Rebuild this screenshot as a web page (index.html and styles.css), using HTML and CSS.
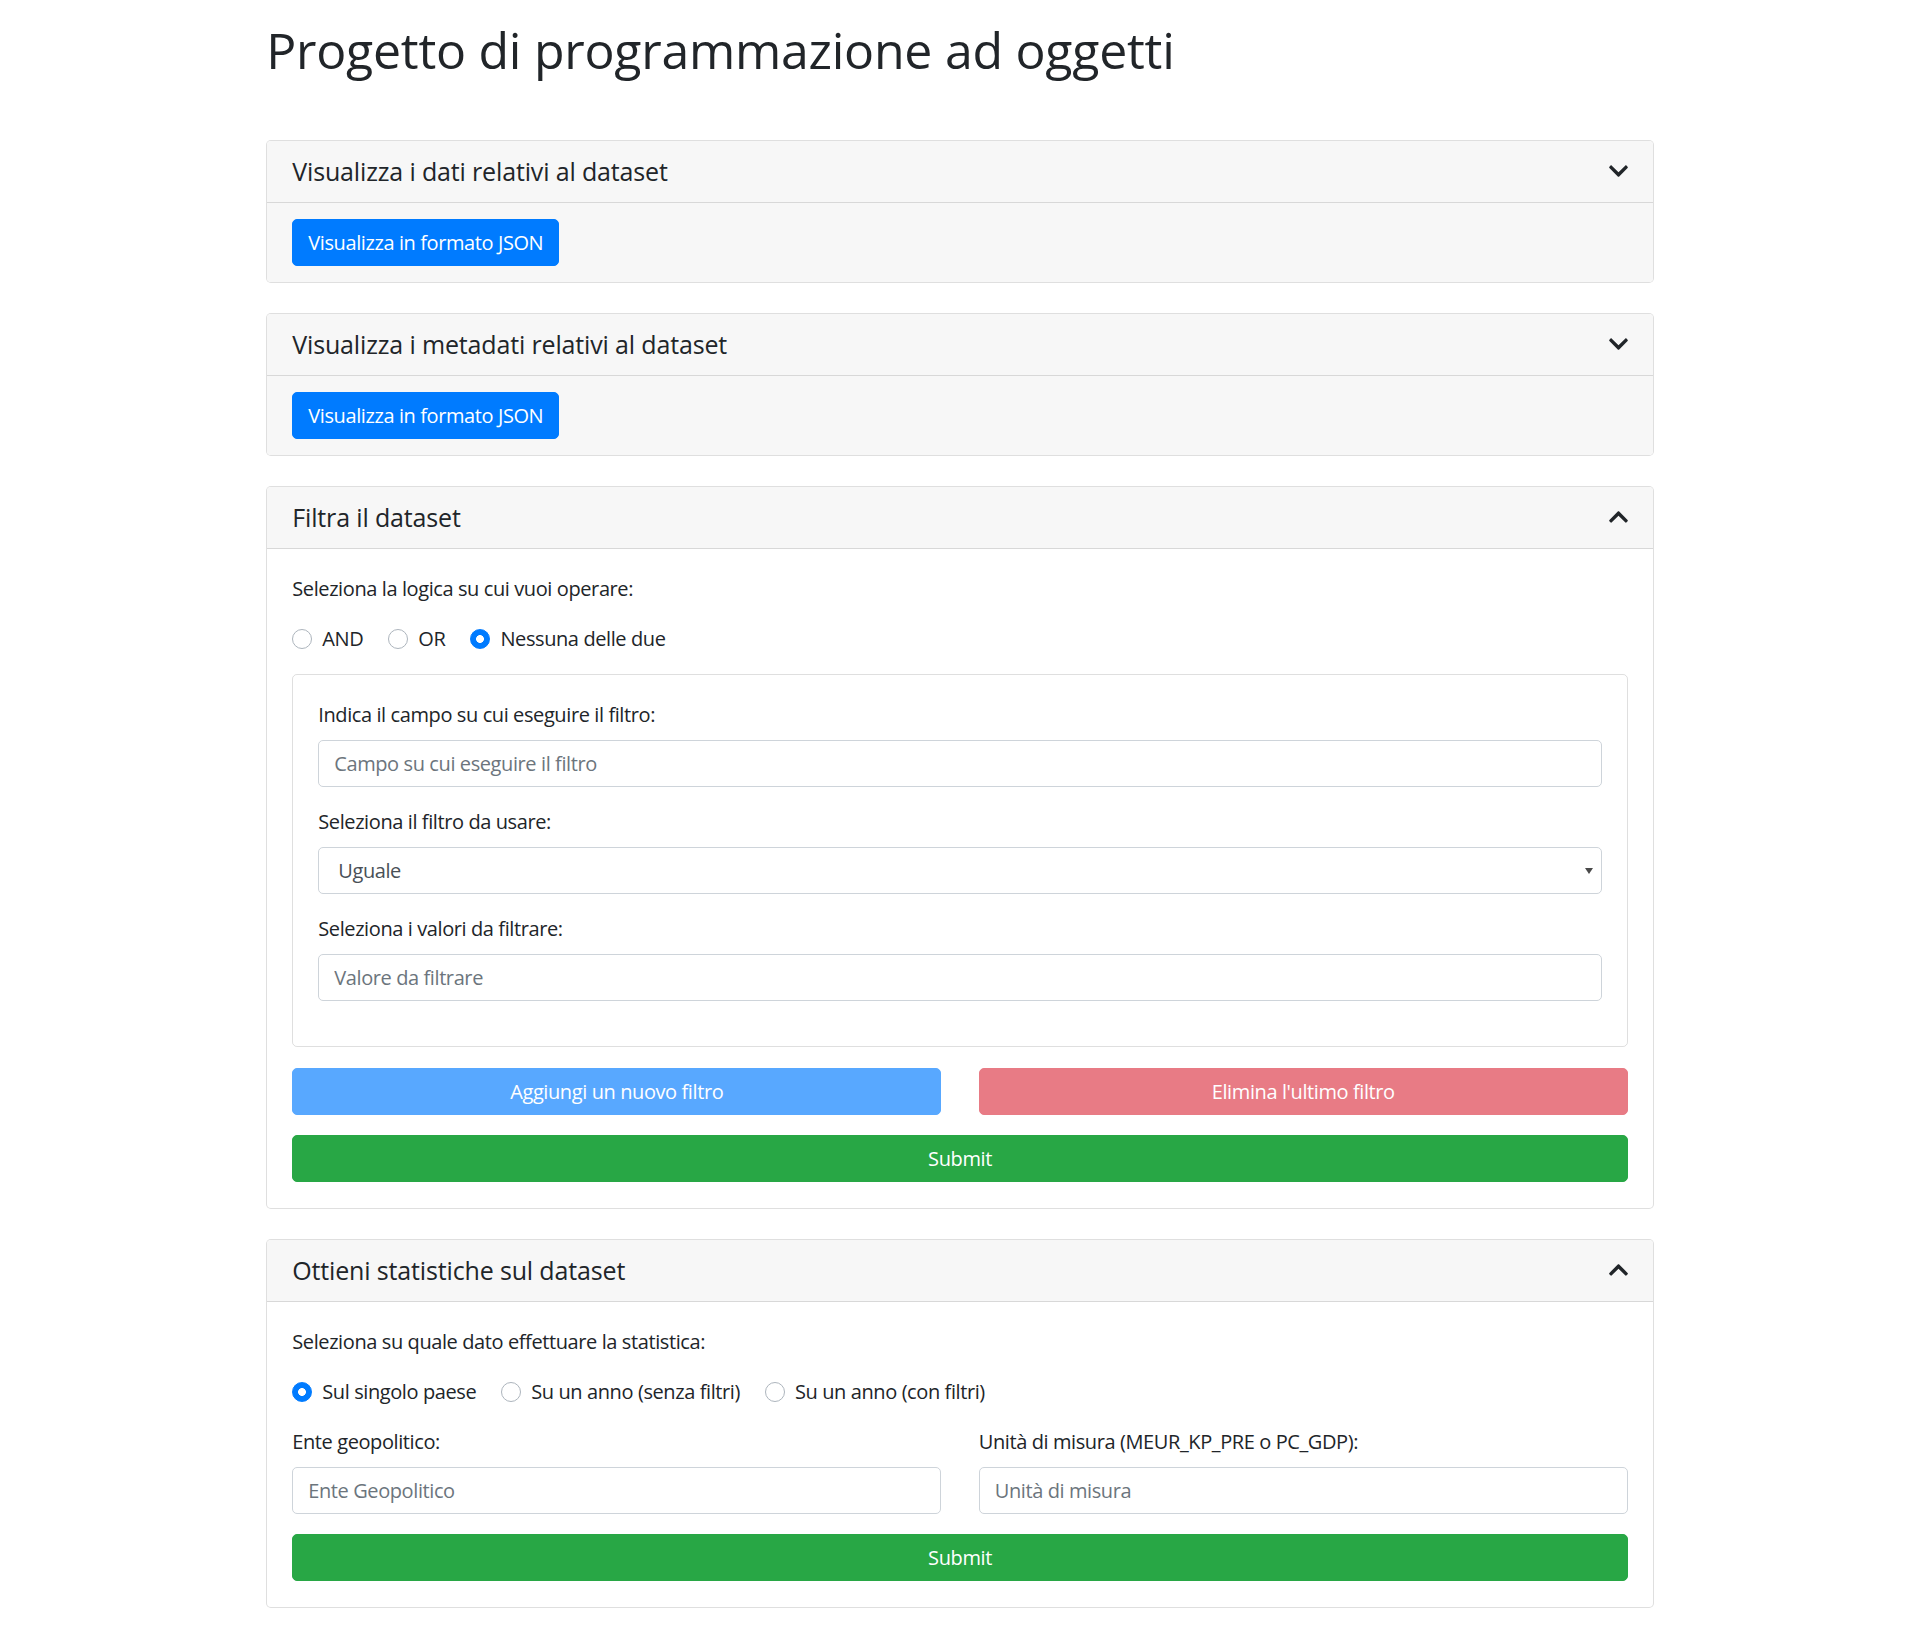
FILE: index.html
```html
<!DOCTYPE html>
<html lang="it">
<head>
<meta charset="utf-8">
<title>Progetto di programmazione ad oggetti</title>
<link rel="stylesheet" href="styles.css">
</head>
<body>
<div class="container">
  <h1 class="page-title">Progetto di programmazione ad oggetti</h1>

  <section class="card">
    <div class="card-header">
      <h5 class="card-title">Visualizza i dati relativi al dataset</h5>
      <svg class="chevron" viewBox="3 120 442 269" aria-hidden="true"><path d="M207.029 381.476L12.686 187.132c-9.373-9.373-9.373-24.569 0-33.941l22.667-22.667c9.357-9.357 24.522-9.375 33.901-.04L224 284.505l154.745-154.021c9.379-9.335 24.544-9.317 33.901.04l22.667 22.667c9.373 9.373 9.373 24.569 0 33.941L240.971 381.476c-9.373 9.372-24.569 9.372-33.942 0z"/></svg>
    </div>
    <div class="card-body card-body-grey">
      <button class="btn btn-primary" type="button">Visualizza in formato JSON</button>
    </div>
  </section>

  <section class="card">
    <div class="card-header">
      <h5 class="card-title">Visualizza i metadati relativi al dataset</h5>
      <svg class="chevron" viewBox="3 120 442 269" aria-hidden="true"><path d="M207.029 381.476L12.686 187.132c-9.373-9.373-9.373-24.569 0-33.941l22.667-22.667c9.357-9.357 24.522-9.375 33.901-.04L224 284.505l154.745-154.021c9.379-9.335 24.544-9.317 33.901.04l22.667 22.667c9.373 9.373 9.373 24.569 0 33.941L240.971 381.476c-9.373 9.372-24.569 9.372-33.942 0z"/></svg>
    </div>
    <div class="card-body card-body-grey">
      <button class="btn btn-primary" type="button">Visualizza in formato JSON</button>
    </div>
  </section>

  <section class="card">
    <div class="card-header">
      <h5 class="card-title">Filtra il dataset</h5>
      <svg class="chevron" viewBox="3 123 442 269" aria-hidden="true"><path d="M240.971 130.524l194.343 194.343c9.373 9.373 9.373 24.569 0 33.941l-22.667 22.667c-9.357 9.357-24.522 9.375-33.901.04L224 227.495 69.255 381.516c-9.379 9.335-24.544 9.317-33.901-.04l-22.667-22.667c-9.373-9.373-9.373-24.569 0-33.941L207.03 130.525c9.372-9.373 24.568-9.373 33.941-.001z"/></svg>
    </div>
    <div class="card-body">
      <p class="section-label">Seleziona la logica su cui vuoi operare:</p>
      <div class="radio-group">
        <label class="radio"><input type="radio" name="logica"><span>AND</span></label>
        <label class="radio"><input type="radio" name="logica"><span>OR</span></label>
        <label class="radio"><input type="radio" name="logica" checked><span>Nessuna delle due</span></label>
      </div>
      <div class="filter-box">
        <div class="form-group">
          <label class="field-label">Indica il campo su cui eseguire il filtro:</label>
          <input class="form-control" type="text" placeholder="Campo su cui eseguire il filtro">
        </div>
        <div class="form-group">
          <label class="field-label">Seleziona il filtro da usare:</label>
          <div class="select-wrap">
            <select class="form-control form-select">
              <option>Uguale</option>
            </select>
          </div>
        </div>
        <div class="form-group">
          <label class="field-label">Seleziona i valori da filtrare:</label>
          <input class="form-control" type="text" placeholder="Valore da filtrare">
        </div>
      </div>
      <div class="two-cols">
        <button class="btn btn-primary btn-block" type="button" disabled>Aggiungi un nuovo filtro</button>
        <button class="btn btn-danger btn-block" type="button" disabled>Elimina l'ultimo filtro</button>
      </div>
      <button class="btn btn-success btn-block" type="button">Submit</button>
    </div>
  </section>

  <section class="card">
    <div class="card-header">
      <h5 class="card-title">Ottieni statistiche sul dataset</h5>
      <svg class="chevron" viewBox="3 123 442 269" aria-hidden="true"><path d="M240.971 130.524l194.343 194.343c9.373 9.373 9.373 24.569 0 33.941l-22.667 22.667c-9.357 9.357-24.522 9.375-33.901.04L224 227.495 69.255 381.516c-9.379 9.335-24.544 9.317-33.901-.04l-22.667-22.667c-9.373-9.373-9.373-24.569 0-33.941L207.03 130.525c9.372-9.373 24.568-9.373 33.941-.001z"/></svg>
    </div>
    <div class="card-body">
      <p class="section-label">Seleziona su quale dato effettuare la statistica:</p>
      <div class="radio-group">
        <label class="radio"><input type="radio" name="stat" checked><span>Sul singolo paese</span></label>
        <label class="radio"><input type="radio" name="stat"><span>Su un anno (senza filtri)</span></label>
        <label class="radio"><input type="radio" name="stat"><span>Su un anno (con filtri)</span></label>
      </div>
      <div class="two-cols">
        <div class="form-group-tight">
          <label class="field-label">Ente geopolitico:</label>
          <input class="form-control" type="text" placeholder="Ente Geopolitico">
        </div>
        <div class="form-group-tight">
          <label class="field-label">Unità di misura (MEUR_KP_PRE o PC_GDP):</label>
          <input class="form-control" type="text" placeholder="Unità di misura">
        </div>
      </div>
      <button class="btn btn-success btn-block" type="button">Submit</button>
    </div>
  </section>
</div>
</body>
</html>
```

FILE: styles.css
```css
* {
  box-sizing: border-box;
}

html, body {
  margin: 0;
  padding: 0;
  background: #fff;
}

body {
  font-family: "Open Sans", "Noto Sans", "Liberation Sans", sans-serif;
  font-size: 20px;
  line-height: 30px;
  letter-spacing: -0.4px;
  color: #212529;
}

.container {
  width: 1425px;
  margin: 0 auto;
  padding: 20px 18.75px 2px;
}

.page-title {
  margin: 0 0 60px;
  font-size: 50px;
  line-height: 60px;
  font-weight: 500;
  letter-spacing: -0.25px;
  color: #212529;
}

.card {
  border: 1px solid rgba(0, 0, 0, 0.125);
  border-radius: 5px;
  margin-bottom: 30px;
  background: #fff;
  overflow: hidden;
}

.card-header {
  display: flex;
  align-items: center;
  justify-content: space-between;
  padding: 15px 25px 16px;
  background: #f7f7f7;
  border-bottom: 1px solid rgba(0, 0, 0, 0.125);
}

.card-title {
  margin: 0;
  font-size: 25px;
  line-height: 30px;
  font-weight: 500;
  letter-spacing: -0.15px;
}

.chevron {
  width: 19px;
  height: 12px;
  fill: #212529;
  display: block;
}

.card-body {
  padding: 25px 25px 26px;
}

.card-body-grey {
  background: #f7f7f7;
  padding: 16px 25px;
}

.btn {
  display: inline-block;
  font-family: inherit;
  font-size: 20px;
  line-height: 30px;
  letter-spacing: -0.4px;
  font-weight: 400;
  padding: 7.5px 15px;
  border: 1px solid transparent;
  border-radius: 5px;
  color: #fff;
  text-align: center;
  cursor: pointer;
}

.btn-primary {
  background: #007bff;
  border-color: #007bff;
}

.btn-danger {
  background: #dc3545;
  border-color: #dc3545;
}

.btn-success {
  background: #28a745;
  border-color: #28a745;
}

.btn:disabled {
  opacity: 0.65;
  cursor: default;
}

.btn-block {
  display: block;
  width: 100%;
}

.section-label {
  margin: 0 0 20px;
}

.radio-group {
  display: flex;
  margin-bottom: 20px;
}

.radio {
  display: inline-flex;
  align-items: center;
  margin-right: 25px;
  line-height: 30px;
}

.radio input {
  appearance: none;
  -webkit-appearance: none;
  width: 20px;
  height: 20px;
  margin: 0 10px 0 0;
  border: 1px solid #adb5bd;
  border-radius: 50%;
  background: #fff;
  flex: none;
}

.radio input:checked {
  border-color: #007bff;
  background: radial-gradient(circle, #fff 0 3.6px, #007bff 4.2px);
}

.filter-box {
  border: 1px solid rgba(0, 0, 0, 0.125);
  border-radius: 5px;
  padding: 25px;
  margin-bottom: 21px;
}

.form-group {
  margin-bottom: 20px;
}

.field-label {
  display: block;
  margin-bottom: 10px;
}

.form-control {
  display: block;
  width: 100%;
  height: 47px;
  padding: 7.5px 15px;
  font-family: inherit;
  font-size: 20px;
  line-height: 30px;
  letter-spacing: -0.4px;
  color: #495057;
  background: #fff;
  border: 1px solid #ced4da;
  border-radius: 5px;
  outline: none;
}

.form-control::placeholder {
  color: #6c757d;
  opacity: 1;
}

.select-wrap {
  position: relative;
}

.form-select {
  appearance: none;
  -webkit-appearance: none;
  padding-left: 19px;
}

.select-wrap::after {
  content: "";
  position: absolute;
  right: 9px;
  top: 21px;
  border-left: 4px solid transparent;
  border-right: 4px solid transparent;
  border-top: 6px solid #4a4a4a;
  pointer-events: none;
}

.two-cols {
  display: grid;
  grid-template-columns: 1fr 1fr;
  column-gap: 37.5px;
  margin-bottom: 20px;
}
```
